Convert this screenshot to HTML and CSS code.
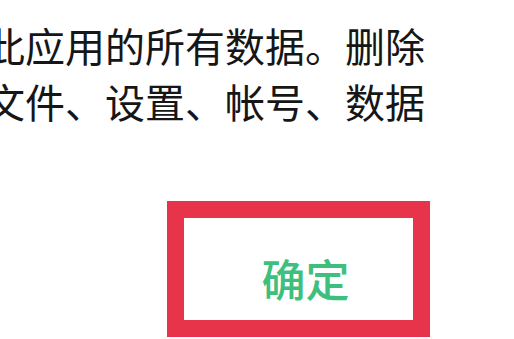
FILE: index.html
```html
<!DOCTYPE html>
<html lang="zh-CN">
<head>
<meta charset="utf-8">
<link rel="stylesheet" href="styles.css">
</head>
<body>
<div class="dialog">
  <div class="message">
    <div class="line">此应用的所有数据。删除</div>
    <div class="line">文件、设置、帐号、数据</div>
  </div>
  <div class="actions">
    <div class="confirm-box">
      <span class="confirm">确定</span>
    </div>
  </div>
</div>
</body>
</html>
```

FILE: styles.css
```css
html, body {
  margin: 0;
  padding: 0;
  background: #ffffff;
}
body {
  width: 514px;
  height: 339px;
  overflow: hidden;
  font-family: "Noto Sans CJK SC", "Noto Sans", sans-serif;
}
.dialog {
  display: flex;
  flex-direction: column;
}
.message {
  margin-left: -15px;
  padding-top: 17px;
  color: #161616;
  font-size: 40px;
  line-height: 56px;
  white-space: nowrap;
}
.actions {
  display: flex;
  padding-left: 167px;
  padding-top: 72px;
}
.confirm-box {
  box-sizing: border-box;
  width: 263px;
  height: 136px;
  border: 17px solid #e8344b;
  display: flex;
  align-items: center;
  justify-content: center;
  padding-left: 14px;
  padding-top: 18px;
}
.confirm {
  color: #3ebf7e;
  font-size: 44px;
  font-weight: 500;
  line-height: 1;
}
```
